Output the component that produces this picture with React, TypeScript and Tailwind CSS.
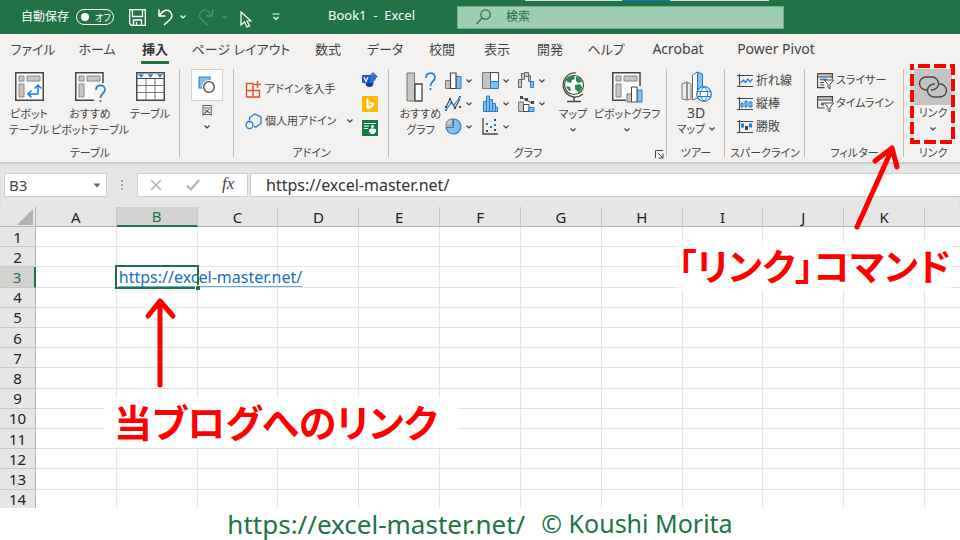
import type { ReactNode } from 'react'
import clsx from 'clsx'

const TABS = [
  { label: 'ファイル', width: 'w-[66px]' },
  { label: 'ホーム', width: 'w-[62px]' },
  { label: '挿入', width: 'w-[54px]', active: true },
  { label: 'ページ レイアウト', width: 'w-[118px]' },
  { label: '数式', width: 'w-[56px]' },
  { label: 'データ', width: 'w-[58px]' },
  { label: '校閲', width: 'w-[56px]' },
  { label: '表示', width: 'w-[54px]' },
  { label: '開発', width: 'w-[52px]' },
  { label: 'ヘルプ', width: 'w-[60px]' },
  { label: 'Acrobat', width: 'w-[84px]', latin: true },
  { label: 'Power Pivot', width: 'w-[112px]', latin: true },
]

const COLUMNS = ['A', 'B', 'C', 'D', 'E', 'F', 'G', 'H', 'I', 'J', 'K', '']
const ROWS = Array.from({ length: 14 }, (_, i) => i + 1)

const GRAY = '#c8c6c4'
const DARK = '#484644'
const BLUE = '#1e7fd0'
const LIGHT = '#83beec'

function Svg({ w, h, children }: { w: number; h: number; children: ReactNode }) {
  return (
    <svg width={w} height={h} viewBox={`0 0 ${w} ${h}`} fill="none" className="shrink-0" aria-hidden="true">
      {children}
    </svg>
  )
}

function Chevron() {
  return (
    <Svg w={6} h={4}>
      <path d="M.5 .5 3 3 5.500 .5" stroke="currentColor" strokeWidth="1.200" />
    </Svg>
  )
}

/* ---------- icons ---------- */

function PivotBase() {
  return (
    <>
      <rect x="1" y="1" width="27" height="27" fill="#fafafa" />
      <path d="M4 4h5v5H4zM12 4h13v5H12zM4 12h5v13H4z" fill={GRAY} stroke="#8a8886" />
    </>
  )
}

function PivotIcon() {
  return (
    <Svg w={29} h={30}>
      <PivotBase />
      <rect x=".75" y=".75" width="27.500" height="27.500" stroke={DARK} strokeWidth="1.500" />
      <path d="M13 22h10V13M16.500 18.500 13 22l3.500 3.500M19.500 16.500 23 13l3.500 3.500" stroke={BLUE} strokeWidth="1.500" />
    </Svg>
  )
}

function PivotSuggestIcon() {
  return (
    <Svg w={31} h={30}>
      <PivotBase />
      <path d="M28 11V.750H.750v27.500H19" stroke={DARK} strokeWidth="1.500" />
      <path d="M19 12h12v18H19z" fill="#f3f2f1" />
      <path d="M21 18c0-6 9-6 9-.5 0 4-4.500 4-4.500 8.500M25.500 28v2" stroke={BLUE} strokeWidth="1.700" />
    </Svg>
  )
}

function TableIcon() {
  return (
    <Svg w={29} h={30}>
      <rect x=".75" y=".75" width="27.500" height="27.500" fill="#fff" stroke={DARK} strokeWidth="1.500" />
      <path d="M1 6.500h27" stroke={DARK} />
      <path d="M1 13.500h27M1 20.500h27M10 7v21M19 7v21" stroke="#797775" />
      <path d="M2.500 2.500h5L5 5.500zM12 2.500h5l-2.500 3zM21.500 2.500h5L24 5.500z" fill={BLUE} stroke={BLUE} strokeWidth=".5" />
    </Svg>
  )
}

function ShapesIcon() {
  return (
    <Svg w={18} h={18}>
      <rect x="1" y="1" width="11" height="11" fill={LIGHT} stroke={BLUE} />
      <circle cx="11" cy="11" r="7" fill="#fff" />
      <circle cx="11" cy="11" r="5.300" fill="#fff" stroke={DARK} strokeWidth="1.300" />
    </Svg>
  )
}

function GetAddinsIcon() {
  return (
    <Svg w={17} h={17}>
      <path d="M1.500 2.500h6.500v13.500H1.500zM1.500 9.500h13V16h-13" stroke="#d9532c" strokeWidth="1.400" />
      <path d="M12.500 0v7M9 3.500h7" stroke="#d9532c" strokeWidth="1.400" />
    </Svg>
  )
}

function MyAddinsIcon() {
  return (
    <Svg w={17} h={17}>
      <path d="M4.500 7.500V4.500L10 1l6 3v6.500l-5 3.500-2-.500" stroke={BLUE} strokeWidth="1.300" />
      <circle cx="4.500" cy="12" r="3.500" stroke={BLUE} strokeWidth="1.300" />
    </Svg>
  )
}

function VisioIcon() {
  return (
    <Svg w={16} h={16}>
      <path d="m11 0 5 4.500-5 4.500-5-4.500z" fill="#3a86d8" />
      <circle cx="7.500" cy="11" r="4" fill="#103f91" />
      <path d="M7 3h7v4l-4 4H7z" fill="#2b70c9" />
      <rect y="3" width="8" height="8" rx="1" fill="#185abd" />
      <path d="m2 5 2 4.500L6 5" stroke="#fff" strokeWidth="1.200" />
    </Svg>
  )
}

function BingIcon() {
  return (
    <Svg w={16} h={16}>
      <rect width="16" height="16" fill="#ffb900" />
      <path d="m4.500 2.500 2 .8v7l3-1.800-1.500-.8-1-2.300 5 1.700v2.600L6.500 13.500l-2-1.200z" fill="#fff" />
    </Svg>
  )
}

function PeopleGraphIcon() {
  return (
    <Svg w={16} h={16}>
      <rect width="16" height="16" fill="#107c41" />
      <path d="M2 3.500h12M2 6h5M2 8.500h4" stroke="#fff" strokeWidth="1.100" />
      <circle cx="10.500" cy="6.500" r="1.600" fill="#fff" />
      <path d="M7 12.500V9.500l2-1h3l2 1v3h-1.500V14h-4v-1.500z" fill="#fff" />
    </Svg>
  )
}

function ChartSuggestIcon() {
  return (
    <Svg w={31} h={30}>
      <path d="M2 1h7.500v28H2z" fill={GRAY} stroke="#797775" />
      <path d="M10 12h7v17h-7z" fill="#fff" stroke={DARK} strokeWidth="1.300" />
      <path d="M21 6c0-6.500 9-6.500 9-.5 0 4-4.500 4-4.500 8.500M25.500 16v2" stroke={BLUE} strokeWidth="1.700" />
    </Svg>
  )
}

function ColumnIcon() {
  return (
    <Svg w={17} h={17}>
      <path d="M.5 8.500h5v8h-5z" fill={GRAY} stroke="#797775" />
      <path d="M11 4.500h5v12h-5z" fill={LIGHT} stroke={BLUE} />
      <path d="M5.500 1H11v15.500H5.500z" fill="#fff" stroke={DARK} strokeWidth="1.200" />
    </Svg>
  )
}

function HierarchyIcon() {
  return (
    <Svg w={17} h={17}>
      <path d="M.5 .5h8v16h-8z" fill={GRAY} stroke="#797775" />
      <path d="M8.500 .5h8v9h-8z" fill="#fff" stroke={DARK} />
      <path d="M8.500 9.500h8v7h-8z" fill={LIGHT} stroke={BLUE} />
    </Svg>
  )
}

function WaterfallIcon() {
  return (
    <Svg w={17} h={17}>
      <path d="M.5 7.500h3v8h-3zM3.500 1.500h3v6h-3zM6.500 .5h4v4h-4zM10.500 3.500h2v6h-2z" fill={GRAY} stroke="#69676a" />
      <path d="M12.500 9.500h3v6h-3z" fill={LIGHT} stroke={BLUE} />
    </Svg>
  )
}

function LineIcon() {
  return (
    <Svg w={17} h={17}>
      <path d="m1 12 4-8 5 9 5-9" stroke={DARK} strokeWidth="1.100" />
      <path d="m1 15 5-7 3 2 6-8" stroke={BLUE} strokeWidth="1.200" />
      <path d="M0 11h2v2H0zM4 3h2v2H4zM9 12h2v2H9zM14 11h2v2h-2z" fill={DARK} />
      <path d="M0 14h2v2H0zM5 7h2v2H5zM14 1h2v2h-2z" fill={BLUE} />
    </Svg>
  )
}

function HistogramIcon() {
  return (
    <Svg w={17} h={17}>
      <path d="M1.500 6.500h3v10h-3zM4.500 1h3v15.500h-3zM7.500 4.500h3v12h-3zM10.500 8.500h3v8h-3z" fill={LIGHT} stroke={BLUE} />
      <path d="M13.500 12h2v4.500h-2z" fill={LIGHT} stroke={BLUE} />
    </Svg>
  )
}

function ComboIcon() {
  return (
    <Svg w={17} h={17}>
      <path d="M.5 7h5v9.500h-5z" fill={GRAY} stroke="#797775" />
      <path d="M5.500 9.500H11v7H5.500z" fill="#fff" stroke={DARK} />
      <path d="M11 12.500h5v4h-5z" fill={LIGHT} stroke={BLUE} />
      <path d="m3 2 5 3 6 3" stroke={DARK} />
      <path d="M2 1h3v3H2zM7 3h3v3H7zM13 6h3v3h-3z" fill={DARK} />
    </Svg>
  )
}

function PieIcon() {
  return (
    <Svg w={17} h={17}>
      <path d="M8.500 1a7.500 7.500 0 1 1-7.500 8.500h7.500z" fill={LIGHT} stroke={BLUE} strokeWidth="1.200" />
      <path d="M7.500 .8V8H.8C.8 4 3.500 1 7.500 .8z" fill={GRAY} stroke="#797775" />
    </Svg>
  )
}

function ScatterIcon() {
  return (
    <Svg w={17} h={17}>
      <path d="M1 0v16h15" stroke={DARK} strokeWidth="1.300" />
      <path d="M4 12h2v2H4zM12 1h2v2h-2zM12 11h2v2h-2z" fill={DARK} />
      <path d="M4 5h2v2H4zM8 8h2v2H8zM12 6h2v2h-2z" fill={BLUE} />
    </Svg>
  )
}

function GlobeIcon() {
  return (
    <Svg w={25} h={31}>
      <circle cx="13" cy="13" r="9.500" fill="#fff" stroke={DARK} strokeWidth="1.200" />
      <path d="M6 7c2-3 5-3.500 7-3l1 3-3 1-1 3-4-1zM15 5c3 0 5 2 6 5l-4 1-2-2zM14 13l5-1 2 3c-1 3-2 5-4 5l-3-3zM5 14l4 1 1 4c-2 0-4-2-5-5z" fill="#1f8f48" />
      <path d="M15 1A12 12 0 1 0 22 22" stroke={DARK} strokeWidth="1.200" />
      <path d="M13 25v4M6 29.500h14" stroke={DARK} strokeWidth="1.400" />
    </Svg>
  )
}

function PivotChartIcon() {
  return (
    <Svg w={31} h={31}>
      <PivotBase />
      <path d="M28 14V.750H.750v27.500H14" stroke={DARK} strokeWidth="1.500" />
      <path d="M15 22h5v8h-5z" fill={GRAY} stroke="#797775" />
      <path d="M25 18h5v12h-5z" fill={LIGHT} stroke={BLUE} />
      <path d="M19.500 15H25v15h-5.500z" fill="#fff" stroke={DARK} />
    </Svg>
  )
}

function Map3DIcon() {
  return (
    <Svg w={31} h={31}>
      <path d="m1 13 5-2v18l-5-1zM6 11l4 2v15l-4 1z" fill="#edebe9" stroke="#797775" />
      <path d="m11.500 4 5-3v26l-5 2z" fill="#fff" stroke="#69676a" />
      <path d="m16.500 1 5 2v20l-5 4z" fill={LIGHT} stroke={BLUE} />
      <circle cx="23" cy="23" r="7.300" fill="#fff" stroke={BLUE} strokeWidth="1.300" />
      <path d="M23 16c-5 4-5 10 0 14M23 16c5 4 5 10 0 14M16.500 20.500h13M16.500 25.500h13" stroke={BLUE} />
    </Svg>
  )
}

function SparkIcon({ kind }: { kind: 'line' | 'column' | 'winloss' }) {
  return (
    <Svg w={17} h={16}>
      <path d="M2.500 1v13M0 2.500h16M0 13.500h16" stroke={DARK} strokeWidth="1.100" />
      {kind === 'line' && <path d="m3.500 10 3-3 2 2.500L11 6l2 3 2.500-3" stroke={BLUE} strokeWidth="1.300" />}
      {kind === 'column' && <path d="M4 7h2v4H4zM8 5h2v6H8zM12 6h3v5h-3z" fill={LIGHT} stroke={BLUE} />}
      {kind === 'winloss' && (
        <>
          <path d="M4 4.500h3v4H4zM12 4.500h3v4h-3z" fill={BLUE} />
          <path d="M8 7h3v4H8z" fill={DARK} />
        </>
      )}
    </Svg>
  )
}

function FilterIcon({ timeline }: { timeline?: boolean }) {
  return (
    <Svg w={17} h={16}>
      <path d="M1 1h14v3H1z" fill={GRAY} />
      {timeline ? (
        <>
          <path d="M.6 12V.6h14.800V6M.6 12h7M1 4h14" stroke={DARK} strokeWidth="1.200" />
          <path d="M4 6.500h3v3H4z" fill="#69676a" />
        </>
      ) : (
        <>
          <path d="M.6 .6h14.800V6M.6 .6v14h7M1 4h14" stroke={DARK} strokeWidth="1.200" />
          <path d="M3 6.500h7" stroke={BLUE} strokeWidth="1.800" />
          <path d="M3 9.500h4M3 12h4" stroke={DARK} />
        </>
      )}
      <path d="M7.500 7h9l-3.500 4.500V16l-2-1.500v-3z" fill="#fff" stroke={DARK} />
    </Svg>
  )
}

function LinkIcon() {
  return (
    <Svg w={30} h={22}>
      <path d="M10 14H8A6.500 6.500 0 0 1 8 1h6a6.500 6.500 0 0 1 0 13h-1" stroke={DARK} strokeWidth="1.400" />
      <path d="M20 8h2a6.500 6.500 0 0 1 0 13h-6a6.500 6.500 0 0 1 0-13h1" stroke={DARK} strokeWidth="1.400" />
    </Svg>
  )
}

/* ---------- ribbon parts ---------- */

function Group({ label, width, children, last }: { label?: string; width: string; children: ReactNode; last?: boolean }) {
  return (
    <section
      className={clsx(
        'relative flex h-[92px] shrink-0 flex-col',
        width,
        !last && 'after:absolute after:top-0 after:right-0 after:h-[88px] after:w-px after:bg-[#c0bebc]',
      )}
    >
      <div className="flex flex-1">{children}</div>
      <h2 className="h-4 text-center text-[11px] leading-4 whitespace-nowrap">{label}</h2>
    </section>
  )
}

function BigButton({ icon, lines, width, menu }: { icon: ReactNode; lines: string[]; width: string; menu?: boolean }) {
  return (
    <button className={clsx('flex shrink-0 flex-col items-center pt-[3px]', width)}>
      <span className="flex h-[34px] items-start">{icon}</span>
      {lines.map((line) => (
        <span key={line} className="text-[11px] leading-4 whitespace-nowrap">{line}</span>
      ))}
      {menu && <span className="flex h-4 items-center"><Chevron /></span>}
    </button>
  )
}

function SmallButton({ icon, label, kana }: { icon: ReactNode; label: string; kana?: boolean }) {
  return (
    <button className={clsx('flex h-[23px] items-center gap-[2px] whitespace-nowrap', kana ? 'text-[11px]' : 'text-[12px]')}>
      {icon}
      {label}
    </button>
  )
}

function MiniButton({ icon, label }: { icon: ReactNode; label: string }) {
  return (
    <button aria-label={label} className="flex h-[23px] items-center gap-1">
      {icon}
      <Chevron />
    </button>
  )
}

function TitleBar() {
  return (
    <header className="relative flex h-[34px] items-center bg-[#217346] text-white">
      <div className="absolute top-0 left-[525px] flex h-px w-[244px] bg-[#d5e0d9]">
        <span className="ml-[97px] w-[48px] bg-[#0078d7]" />
      </div>
      <label className="ml-[21px] flex w-[93px] shrink-0 items-center justify-between text-[12px] whitespace-nowrap">
        自動保存
        <span className="relative flex h-4 w-[38px] items-center rounded-full border border-white">
          <input type="checkbox" className="ml-1 size-2 appearance-none rounded-full bg-white" />
          <span className="ml-[6px] text-[9px] leading-none">オフ</span>
        </span>
      </label>
      <div className="ml-[15px] flex shrink-0 items-center">
        <button aria-label="上書き保存">
          <Svg w={17} h={17}>
            <path d="M.7 .7h15.600v15.600H2.500L.7 14.500zM3.500 1v6.500h10V1M4.500 16v-5h8v5M7.500 16v-3" stroke="#fff" strokeWidth="1.300" />
          </Svg>
        </button>
        <button aria-label="元に戻す" className="ml-3 flex items-center gap-[6px]">
          <Svg w={16} h={18}>
            <path d="M1 1.500v6.500h6.500M1.500 7.500C5 2 9 1 12 3.500c3 3 2.500 6-.5 8.500L6 17" stroke="#fff" strokeWidth="1.500" />
          </Svg>
          <Chevron />
        </button>
        <button aria-label="やり直し" className="ml-3 flex items-center gap-2 text-[#4e9270]">
          <Svg w={16} h={18}>
            <path d="M14.500 1.500v6.500H8M14 7.500C10.500 2 6.500 1 3.500 3.500c-3 3-2.500 6 .5 8.500l5.500 5" stroke="currentColor" strokeWidth="1.300" />
          </Svg>
          <Chevron />
        </button>
        <button aria-label="選択" className="ml-3 pt-1">
          <Svg w={12} h={17}>
            <path d="M1 1v13l3.500-3 2.500 5 2.500-1-2.500-5H11z" stroke="#fff" strokeWidth="1.200" />
          </Svg>
        </button>
        <button aria-label="クイック アクセスのカスタマイズ" className="ml-5">
          <Svg w={8} h={8}>
            <path d="M.5 1h7M1.500 4 4 6.500 6.500 4" stroke="#fff" strokeWidth="1.200" />
          </Svg>
        </button>
      </div>
      <h1 className="ml-12 w-[129px] shrink-0 pb-[2px] text-[13px] whitespace-pre">Book1  -  Excel</h1>
      <label className="flex h-[23px] w-[327px] items-center border border-[#6fae8b] bg-[#9fcdb3] pl-[18px] text-[#217346]">
        <Svg w={16} h={16}>
          <circle cx="9.500" cy="5.500" r="4.700" stroke="currentColor" strokeWidth="1.200" />
          <path d="m6 9-5.500 6" stroke="currentColor" strokeWidth="1.200" />
        </Svg>
        <input
          aria-label="検索"
          placeholder="検索"
          className="ml-[14px] min-w-0 flex-1 bg-transparent text-[12px] outline-none placeholder:text-[#217346]"
        />
      </label>
    </header>
  )
}

function Tabs() {
  return (
    <nav className="flex h-[31px] pt-[3px] pb-[2px] text-[#444]">
      {TABS.map((tab) => (
        <button
          key={tab.label}
          className={clsx(
            'flex shrink-0 flex-col items-center justify-between whitespace-nowrap',
            tab.width,
            tab.latin ? 'text-[14px]' : 'text-[13px]',
            tab.active && 'font-bold text-[#333]',
          )}
        >
          <span className="leading-6">{tab.label}</span>
          {tab.active && <span className="h-[3px] w-7 shrink-0 bg-[#217346]" />}
        </button>
      ))}
    </nav>
  )
}

function Ribbon() {
  return (
    <div className="flex h-[97px] overflow-hidden pt-1 text-[#444]">
      <Group label="テーブル" width="w-[180px]">
        <BigButton width="w-[58px]" icon={<PivotIcon />} lines={['ピボット', 'テーブル']} />
        <BigButton width="w-[64px]" icon={<PivotSuggestIcon />} lines={['おすすめ', 'ピボットテーブル']} />
        <BigButton width="w-[56px]" icon={<TableIcon />} lines={['テーブル']} />
      </Group>

      <Group width="w-[54px]">
        <button className="flex w-full flex-col items-center">
          <span className="flex h-8 w-8 items-center justify-center border border-[#d2d0ce] bg-white">
            <ShapesIcon />
          </span>
          <span className="mt-[2px] text-[11px] leading-4">図</span>
          <span className="flex h-4 items-center"><Chevron /></span>
        </button>
      </Group>

      <Group label="アドイン" width="w-[155px]">
        <div className="ml-[11px] flex w-[117px] flex-col items-start pt-2">
          <button className="flex h-6 items-center gap-[3px] text-[11px] whitespace-nowrap">
            <GetAddinsIcon />
            アドインを入手
          </button>
          <button className="mt-2 flex h-6 w-[108px] items-center gap-[3px] text-[11px] whitespace-nowrap">
            <MyAddinsIcon />
            <span className="flex-1 text-left">個人用アドイン</span>
            <Chevron />
          </button>
        </div>
        <div className="flex flex-col gap-2 pt-[3px]">
          <button aria-label="Visio"><VisioIcon /></button>
          <button aria-label="Bing"><BingIcon /></button>
          <button aria-label="People Graph"><PeopleGraphIcon /></button>
        </div>
      </Group>

      <Group label="グラフ" width="w-[278px]">
        <div className="ml-2 flex">
          <BigButton width="w-[47px]" icon={<ChartSuggestIcon />} lines={['おすすめ', 'グラフ']} />
          <div className="ml-px grid h-[69px] w-[110px] grid-cols-3">
            <MiniButton label="縦棒" icon={<ColumnIcon />} />
            <MiniButton label="階層構造" icon={<HierarchyIcon />} />
            <MiniButton label="ウォーターフォール" icon={<WaterfallIcon />} />
            <MiniButton label="折れ線" icon={<LineIcon />} />
            <MiniButton label="統計" icon={<HistogramIcon />} />
            <MiniButton label="組み合わせ" icon={<ComboIcon />} />
            <MiniButton label="円" icon={<PieIcon />} />
            <MiniButton label="散布図" icon={<ScatterIcon />} />
          </div>
          <BigButton width="w-9" icon={<GlobeIcon />} lines={['マップ']} menu />
          <BigButton width="w-[72px]" icon={<PivotChartIcon />} lines={['ピボットグラフ']} menu />
        </div>
        <button aria-label="すべてのグラフを表示" className="absolute right-[3px] bottom-[2px]">
          <Svg w={9} h={9}>
            <path d="M.5 8V.5H8M3 3l4.500 4.500M8 3.500V8H3.500" stroke={DARK} />
          </Svg>
        </button>
      </Group>

      <Group label="ツアー" width="w-[58px]">
        <button className="flex w-full flex-col items-center pt-[2px]">
          <span className="flex h-[34px]"><Map3DIcon /></span>
          <span className="text-[14px] leading-4">3D</span>
          <span className="flex items-center gap-1 text-[11px] leading-4">マップ <Chevron /></span>
        </button>
      </Group>

      <Group label="スパークライン" width="w-20">
        <div className="ml-3">
          <SmallButton icon={<SparkIcon kind="line" />} label="折れ線" />
          <SmallButton icon={<SparkIcon kind="column" />} label="縦棒" />
          <SmallButton icon={<SparkIcon kind="winloss" />} label="勝敗" />
        </div>
      </Group>

      <Group label="フィルター" width="w-[99px]">
        <div className="ml-3">
          <SmallButton icon={<FilterIcon />} label="スライサー" kana />
          <SmallButton icon={<FilterIcon timeline />} label="タイムライン" kana />
        </div>
      </Group>

      <Group label="リンク" width="w-[58px]" last>
        <button className="mx-auto flex w-[38px] flex-col items-center">
          <span className="flex h-9 w-full items-center justify-center bg-[#c5c3c1]"><LinkIcon /></span>
          <span className="text-[11px] leading-4">リンク</span>
          <span className="flex h-4 items-center"><Chevron /></span>
        </button>
      </Group>
    </div>
  )
}

function FormulaBar() {
  return (
    <div className="flex h-[45px] items-start bg-[#e6e6e6] pt-[11px] shadow-[inset_0_3px_3px_-1px_#c6c6c6]">
      <div className="ml-1 flex h-6 w-[103px] shrink-0 items-center border border-[#d0d0d0] bg-white">
        <input aria-label="名前ボックス" defaultValue="B3" className="ml-1 min-w-0 flex-1 text-[15px] text-[#444] outline-none" />
        <button aria-label="名前の一覧" className="mr-[5px]">
          <Svg w={8} h={5}><path d="M.5 .5h7L4 4.500z" fill="#666" /></Svg>
        </button>
      </div>
      <div className="ml-[13px] flex h-6 items-center">
        <Svg w={4} h={12}><path d="M1 1h2v2H1zM1 5h2v2H1zM1 9h2v2H1z" fill="#a6a6a6" /></Svg>
      </div>
      <div className="ml-[13px] flex h-6 w-[111px] shrink-0 items-center border border-[#d0d0d0] bg-white">
        <button aria-label="キャンセル" className="ml-3">
          <Svg w={12} h={12}><path d="m1 1 10 10M11 1 1 11" stroke="#b5b5b5" strokeWidth="1.600" /></Svg>
        </button>
        <button aria-label="入力" className="ml-6">
          <Svg w={14} h={12}><path d="m1 6.500 4 4L13 1" stroke="#b5b5b5" strokeWidth="2.200" /></Svg>
        </button>
        <button aria-label="関数の挿入" className="ml-[22px] pb-[2px] font-['Liberation_Serif',serif] text-[17px] leading-5 text-[#444] italic">
          fx
        </button>
      </div>
      <input
        aria-label="数式バー"
        defaultValue="https://excel-master.net/"
        className="ml-[2px] h-6 min-w-0 flex-1 border border-r-0 border-[#d0d0d0] bg-white pl-[15px] text-[16px] text-[#333] outline-none"
      />
    </div>
  )
}

function Sheet() {
  return (
    <div className="h-[301px] overflow-hidden">
      <table className="h-[303px] w-[1006px] table-fixed border-separate border-spacing-0 text-[16px] leading-4">
        <thead>
          <tr className="h-5">
            <th className="w-9 border-r border-b border-[#b5b5b5] bg-[#e6e6e6] p-0">
              <span className="flex justify-end pr-[2px]">
                <Svg w={16} h={16}><path d="M16 0v16H0z" fill="#b2b2b2" /></Svg>
              </span>
            </th>
            {COLUMNS.map((col) => (
              <th
                key={col}
                scope="col"
                className={clsx(
                  'border-r border-[#c6c6c6] p-0 text-[15px] font-normal',
                  col === 'B' ? 'border-b-2 border-b-[#217346] bg-[#d2d2d0] text-[#217346]' : 'border-b border-b-[#b0b0b0] bg-[#e6e6e6] text-[#222]',
                )}
              >
                {col}
              </th>
            ))}
          </tr>
        </thead>
        <tbody>
          {ROWS.map((row) => (
            <tr key={row}>
              <th
                scope="row"
                className={clsx(
                  'border-b border-b-[#c9c9c9] p-0 text-[15px] leading-[14px] font-normal',
                  row === 3 ? 'border-r-2 border-r-[#217346] bg-[#d2d2d0] text-[#217346]' : 'border-r border-r-[#b5b5b5] bg-[#e6e6e6] text-[#222]',
                )}
              >
                {row}
              </th>
              {COLUMNS.map((col) => (
                <td key={col} className={clsx('border-r border-b border-[#e4e4e4] p-0', row === 3 && col === 'B' && 'relative z-10')}>
                  {row === 3 && col === 'B' && (
                    <>
                      <a href="https://excel-master.net/" className="absolute top-0 left-[2px] leading-5 whitespace-nowrap text-[#1b6ec2] underline decoration-[#6ea6dc] decoration-1 underline-offset-[3px]">
                        https://excel-master.net/
                      </a>
                      <span className="pointer-events-none absolute -inset-x-[2px] -top-[2px] -bottom-[2px] border-2 border-[#217346]" />
                      <span className="absolute -right-[3px] -bottom-[3px] size-[5px] border-t border-l border-white bg-[#217346]" />
                    </>
                  )}
                </td>
              ))}
            </tr>
          ))}
        </tbody>
      </table>
    </div>
  )
}

/* red notes drawn over the sheet */
function Notes() {
  return (
    <>
      <p className="absolute top-[242px] left-[678px] bg-white/80 text-[37px] leading-[50px] font-bold whitespace-nowrap text-[#f00]">
        「リンク」コマンド
      </p>
      <p className="absolute top-[396px] left-[104px] bg-white/80 pr-5 pl-[10px] text-[38px] leading-[52px] font-bold whitespace-nowrap text-[#f00]">
        当ブログへのリンク
      </p>
      <svg width="960" height="400" viewBox="0 0 960 400" fill="none" stroke="#f00" className="pointer-events-none absolute top-0 left-0">
        <path d="M912 66h41v76h-41z" strokeWidth="4" strokeDasharray="12 4" strokeDashoffset="10" />
        <path d="M857 227 892 149M875 161l17-13 5 19" strokeWidth="5" strokeLinecap="round" strokeLinejoin="round" />
        <path d="M160 385V301M148 316l12-15 13 15" strokeWidth="5" strokeLinecap="round" strokeLinejoin="round" />
      </svg>
    </>
  )
}

export default function App() {
  return (
    <div className="relative overflow-hidden bg-white font-['Noto_Sans','Noto_Sans_CJK_JP',sans-serif] [font-feature-settings:'palt']">
      <TitleBar />
      <div className="bg-[#f3f2f1]">
        <Tabs />
        <Ribbon />
      </div>
      <FormulaBar />
      <Sheet />
      <footer className="flex h-8 items-center justify-center gap-4 text-[25px] whitespace-nowrap text-[#217346]">
        <a href="https://excel-master.net/" className="text-[26px]">https://excel-master.net/</a>
        <span>© Koushi Morita</span>
      </footer>
      <Notes />
    </div>
  )
}
